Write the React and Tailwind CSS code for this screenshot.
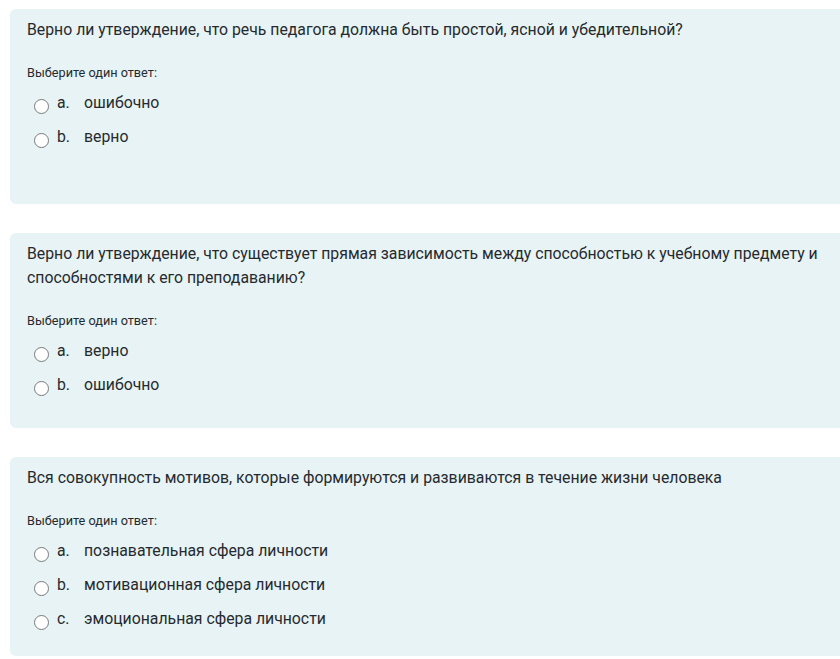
const questions = [
  {
    text: 'Верно ли утверждение, что речь педагога должна быть простой, ясной и убедительной?',
    answers: ['ошибочно', 'верно'],
  },
  {
    text: 'Верно ли утверждение, что существует прямая зависимость между способностью к учебному предмету и способностями к его преподаванию?',
    answers: ['верно', 'ошибочно'],
  },
  {
    text: 'Вся совокупность мотивов, которые формируются и развиваются в течение жизни человека',
    answers: ['познавательная сфера личности', 'мотивационная сфера личности', 'эмоциональная сфера личности'],
  },
];

const letters = ['a.', 'b.', 'c.'];

function Question({ q }) {
  return (
    <div className="rounded-md bg-[#e7f3f5] pl-[17px] pr-[40px] pt-[9px] pb-[20px] min-h-[195px]">
      <div className="text-[15.8px] leading-[24px] text-[#262a2e]">{q.text}</div>
      <div className="mt-[21px] text-[12.7px] leading-[20px] text-[#262a2e]">Выберите один ответ:</div>
      <div className="mt-[3px] ml-[7px]">
        {q.answers.map((a, i) => (
          <label key={i} className="flex items-center h-[34px] text-[15.8px] text-[#262a2e] cursor-pointer">
            <span className="w-[15px] h-[15px] rounded-full border border-[#7a7a7a] bg-white mt-[6px] shrink-0" />
            <span className="ml-[8px] w-[27px]">{letters[i]}</span>
            <span>{a}</span>
          </label>
        ))}
      </div>
    </div>
  );
}

export default function App() {
  return (
    <div className="w-full overflow-hidden bg-white" style={{ fontFamily: 'Roboto, "Noto Sans", sans-serif' }}>
      <div className="ml-[10px] mr-[-20px] pt-[9px] flex flex-col gap-[29px]">
        {questions.map((q, i) => (
          <Question key={i} q={q} />
        ))}
      </div>
    </div>
  );
}
